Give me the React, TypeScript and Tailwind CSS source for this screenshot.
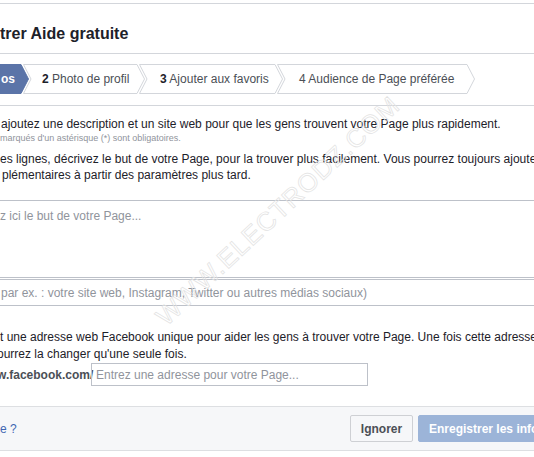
import React from "react";

function Step({
  width,
  first,
  active,
  children,
  textLeft,
}: {
  width: number;
  first?: boolean;
  active?: boolean;
  children: React.ReactNode;
  textLeft: number;
}) {
  const w = width;
  const h = 30;
  const d = 8;
  const pts = first
    ? `0,0.5 ${w - d},0.5 ${w - 0.5},15 ${w - d},${h - 0.5} 0,${h - 0.5}`
    : `0.5,0.5 ${w - d},0.5 ${w - 0.5},15 ${w - d},${h - 0.5} 0.5,${h - 0.5} ${d},15`;
  return (
    <div
      className={`relative h-[30px] shrink-0 flex items-center ${first ? "" : "ml-[-6px]"}`}
      style={{ width: w }}
    >
      <svg className="absolute inset-0" width={w} height={h}>
        <polygon
          points={pts}
          fill={active ? "#5b74a8" : "#ffffff"}
          stroke={active ? "#5b74a8" : "#d3d6db"}
          strokeWidth="1"
        />
      </svg>
      <span
        className={`relative whitespace-nowrap text-[12px] ${active ? "text-white font-bold" : "text-[#4b4f56]"}`}
        style={{ marginLeft: textLeft }}
      >
        {children}
      </span>
    </div>
  );
}

export default function App() {
  return (
    <div className="relative w-[534px] h-[457px] overflow-hidden bg-white font-['Liberation_Sans',Arial,sans-serif] text-[#1d2129]">
      <div className="h-[3px]" />
      {/* Title */}
      <div className="h-[50px] border-t border-[#d3d6db] pt-[20px]">
        <div className="text-[16px] leading-[19px] font-bold whitespace-nowrap">trer Aide gratuite</div>
      </div>
      {/* Steps */}
      <div className="h-[52px] border-t border-[#d3d6db] pt-[10px]">
        <div className="flex">
          <Step width={29} first active textLeft={1}>
            os
          </Step>
          <Step width={122} textLeft={19}>
            <b className="text-[#1d2129]">2</b> Photo de profil
          </Step>
          <Step width={144} textLeft={21}>
            <b className="text-[#1d2129]">3</b> Ajouter aux favoris
          </Step>
          <Step width={198} textLeft={22}>
            4 Audience de Page préférée
          </Step>
        </div>
      </div>
      {/* Description */}
      <div className="h-[95px] border-t border-[#d3d6db] pt-[10px] whitespace-nowrap">
        <div className="text-[12px] leading-[16px] pl-[1px]">
          ajoutez une description et un site web pour que les gens trouvent votre Page plus rapidement.
        </div>
        <div className="mt-[1px] text-[9px] leading-[11px] text-[#90949c]">
          marqués d'un astérisque (*) sont obligatoires.
        </div>
        <div className="mt-[7px] text-[12px] leading-[16px]">
          es lignes, décrivez le but de votre Page, pour la trouver plus facilement. Vous pourrez toujours ajouter des informations
        </div>
        <div className="text-[12px] leading-[17px] pl-[2px]">
          plémentaires à partir des paramètres plus tard.
        </div>
      </div>
      {/* Textarea */}
      <div className="h-[78px] border-t border-b border-[#bdc1c9] pt-[7px]">
        <div className="text-[12px] leading-[16px] text-[#90949c] whitespace-nowrap">z ici le but de votre Page...</div>
      </div>
      <div className="mt-[1px] h-[27px] border-t border-b border-[#bdc1c9] flex items-center">
        <div className="text-[12px] text-[#90949c] whitespace-nowrap pl-[1px]">
          par ex. : votre site web, Instagram, Twitter ou autres médias sociaux)
        </div>
      </div>
      {/* Web address */}
      <div className="h-[100px] pt-[23px] whitespace-nowrap">
        <div className="text-[12px] leading-[17px]">
          t une adresse web Facebook unique pour aider les gens à trouver votre Page. Une fois cette adresse créée, vous
        </div>
        <div className="text-[12px] leading-[17px] ml-[-3px]">ourrez la changer qu'une seule fois.</div>
        <div className="flex items-center">
          <span className="text-[12px] font-bold text-[#4b4f56] ml-[-3px] w-[94px] shrink-0">w.facebook.com/</span>
          <div className="w-[277px] h-[23px] border border-[#bdc1c9] flex items-center pl-[4px] text-[12px] text-[#90949c]">
            Entrez une adresse pour votre Page...
          </div>
        </div>
      </div>
      {/* Footer */}
      <div className="h-[45px] border-t border-b border-[#dddfe2] bg-[#f6f7f9] flex items-center">
        <div className="w-[350px] shrink-0 text-[12px] text-[#4267b2]">e ?</div>
        <button className="h-[27px] w-[63px] shrink-0 border border-[#ced0d4] bg-[#f6f7f9] rounded-[2px] text-[12px] font-bold text-[#4b4f56]">
          Ignorer
        </button>
        <button className="ml-[5px] h-[27px] shrink-0 bg-[#9cb4d8] border border-[#9cb4d8] rounded-[2px] pl-[10px] pr-[10px] text-[12px] font-bold text-white whitespace-nowrap">
          Enregistrer les informations
        </button>
      </div>
      {/* Watermark */}
      <div className="pointer-events-none absolute left-[278px] top-[211px] -translate-x-1/2 -translate-y-1/2 rotate-[-43deg] whitespace-nowrap text-[26px] tracking-[1px] text-transparent [-webkit-text-stroke:0.7px_#e2e2e2]">
        WWW.ELECTRODZ.COM
      </div>
    </div>
  );
}
